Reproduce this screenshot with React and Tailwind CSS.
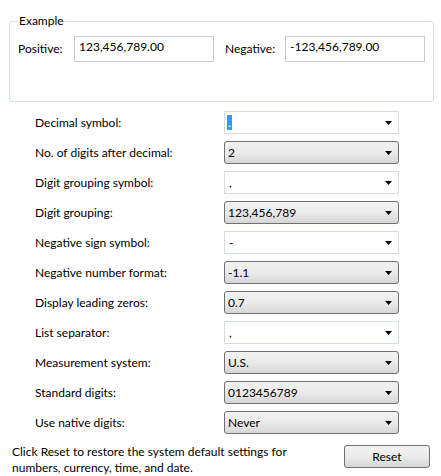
const ROWS = [
  { label: 'Decimal symbol:', value: '.', edit: true, selected: true },
  { label: 'No. of digits after decimal:', value: '2' },
  { label: 'Digit grouping symbol:', value: ',', edit: true },
  { label: 'Digit grouping:', value: '123,456,789' },
  { label: 'Negative sign symbol:', value: '-', edit: true },
  { label: 'Negative number format:', value: '-1.1' },
  { label: 'Display leading zeros:', value: '0.7' },
  { label: 'List separator:', value: ',', edit: true },
  { label: 'Measurement system:', value: 'U.S.' },
  { label: 'Standard digits:', value: '0123456789' },
  { label: 'Use native digits:', value: 'Never' },
];

function Arrow() {
  return (
    <svg width="7" height="4" viewBox="0 0 7 4" className="shrink-0">
      <path d="M0 0h7L3.5 4z" fill="#000" />
    </svg>
  );
}

function Combo({ value, edit, selected }) {
  if (edit) {
    return (
      <div className="w-[175px] h-[23px] border border-[#d5dbe3] bg-white flex items-center pl-[2px] pr-[6px] justify-between">
        {selected ? (
          <span className="bg-[#3399ff] text-white leading-[15px] px-[1px]">{value}</span>
        ) : (
          <span className="pl-[2px]">{value}</span>
        )}
        <Arrow />
      </div>
    );
  }
  return (
    <div className="w-[175px] h-[23px] border border-[#707070] rounded-[3px] bg-gradient-to-b from-[#f2f2f2] via-[#ebebeb] to-[#d6d6d6] flex items-center pl-[3px] pr-[6px] justify-between">
      <span>{value}</span>
      <Arrow />
    </div>
  );
}

export default function App() {
  return (
    <div className="w-[441px] h-[476px] bg-white text-[12px] text-black relative" style={{ fontFamily: 'Lato, "Noto Sans", sans-serif' }}>
      <div className="pt-[14px] px-[9px]">
        <fieldset className="border border-[#d5dfe5] rounded-[3px] h-[88px] px-[8px] pt-[4px] w-[423px]">
          <legend className="px-[1px] ml-[0px] leading-[14px]">Example</legend>
          <div className="flex items-center mt-[4px]">
            <span className="w-[56px]">Positive:</span>
            <div className="w-[140px] h-[26px] border border-[#c8ccd2] px-[4px] pt-[1px] leading-[18px]">123,456,789.00</div>
            <span className="ml-[11px] w-[60px]">Negative:</span>
            <div className="w-[140px] h-[26px] border border-[#c8ccd2] px-[4px] pt-[1px] leading-[18px]">-123,456,789.00</div>
          </div>
        </fieldset>
      </div>
      <div className="mt-[9px] flex flex-col gap-[7px]">
        {ROWS.map((r) => (
          <div key={r.label} className="flex items-center">
            <span className="w-[224px] pl-[35px]">{r.label}</span>
            <Combo value={r.value} edit={r.edit} selected={r.selected} />
          </div>
        ))}
      </div>
      <div className="flex justify-between items-start mt-[11px] pl-[12px] pr-[11px]">
        <p className="leading-[16px] -mt-[1px]">Click Reset to restore the system default settings for<br />numbers, currency, time, and date.</p>
        <button className="w-[86px] h-[23px] border border-[#707070] rounded-[3px] bg-gradient-to-b from-[#f2f2f2] via-[#ebebeb] to-[#d6d6d6]">Reset</button>
      </div>
    </div>
  );
}
